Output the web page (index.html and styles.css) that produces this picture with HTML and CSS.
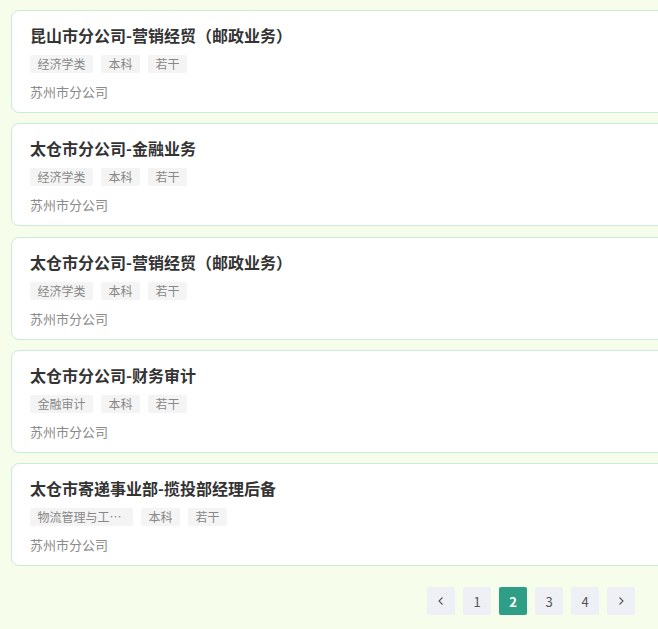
FILE: index.html
```html
<!DOCTYPE html>
<html lang="zh-CN">

<head>
    <meta charset="UTF-8" />
    <meta name="viewport" content="width=device-width, initial-scale=1.0" />
    <title>岗位列表</title>
    <link rel="stylesheet" href="styles.css">
</head>

<body>
    <ul class="job-list">
        <li class="job">
            <h3 class="job-title">昆山市分公司-营销经贸（邮政业务）</h3>
            <div class="tags">
                <span class="tag">经济学类</span>
                <span class="tag">本科</span>
                <span class="tag">若干</span>
            </div>
            <p class="job-place">苏州市分公司</p>
        </li>
        <li class="job">
            <h3 class="job-title">太仓市分公司-金融业务</h3>
            <div class="tags">
                <span class="tag">经济学类</span>
                <span class="tag">本科</span>
                <span class="tag">若干</span>
            </div>
            <p class="job-place">苏州市分公司</p>
        </li>
        <li class="job">
            <h3 class="job-title">太仓市分公司-营销经贸（邮政业务）</h3>
            <div class="tags">
                <span class="tag">经济学类</span>
                <span class="tag">本科</span>
                <span class="tag">若干</span>
            </div>
            <p class="job-place">苏州市分公司</p>
        </li>
        <li class="job">
            <h3 class="job-title">太仓市分公司-财务审计</h3>
            <div class="tags">
                <span class="tag">金融审计</span>
                <span class="tag">本科</span>
                <span class="tag">若干</span>
            </div>
            <p class="job-place">苏州市分公司</p>
        </li>
        <li class="job">
            <h3 class="job-title">太仓市寄递事业部-揽投部经理后备</h3>
            <div class="tags">
                <span class="tag tag-long">物流管理与工程类</span>
                <span class="tag">本科</span>
                <span class="tag">若干</span>
            </div>
            <p class="job-place">苏州市分公司</p>
        </li>
    </ul>

    <!-- 分页 -->
    <div class="pager">
        <a class="page" href="javascript:;">
            <svg width="10" height="10" viewBox="0 0 10 10"><path d="M6.5 1.5 3 5l3.5 3.5" fill="none" stroke="#555" stroke-width="1.1"/></svg>
        </a>
        <a class="page" href="javascript:;">1</a>
        <a class="page active" href="javascript:;">2</a>
        <a class="page" href="javascript:;">3</a>
        <a class="page" href="javascript:;">4</a>
        <a class="page" href="javascript:;">
            <svg width="10" height="10" viewBox="0 0 10 10"><path d="M3.5 1.5 7 5 3.5 8.5" fill="none" stroke="#555" stroke-width="1.1"/></svg>
        </a>
    </div>
</body>

</html>
```

FILE: styles.css
```css
* {
    margin: 0;
    padding: 0;
    box-sizing: border-box;
}

html {
    overflow-x: hidden;
}

body {
    background: #f6fdea;
    font-family: "Noto Sans CJK SC", "Noto Sans", sans-serif;
    color: #333;
}

ul {
    list-style: none;
}

.job-list {
    padding: 10px 0 0 11px;
    margin-right: -20px;
    display: flex;
    flex-direction: column;
    gap: 10.25px;
}

.job {
    background: #fff;
    border: 1px solid #c9ebd8;
    border-radius: 8px;
    padding: 12px 18px 10px;
}

.job-title {
    font-size: 16px;
    line-height: 24px;
    font-weight: bold;
    color: #333;
}

.tags {
    display: flex;
    gap: 8px;
    margin-top: 8px;
}

.tag {
    font-size: 12px;
    line-height: 18px;
    height: 18px;
    padding: 0 7.5px;
    background: #f4f4f4;
    color: #888;
    border-radius: 2px;
    white-space: nowrap;
}

.tag-long {
    max-width: 103px;
    overflow: hidden;
    text-overflow: ellipsis;
}

.job-place {
    margin-top: 9px;
    font-size: 13px;
    line-height: 20px;
    color: #8a8a8a;
}

/* 分页 */
.pager {
    display: flex;
    justify-content: flex-end;
    gap: 8px;
    margin: 21px 23px 0 0;
}

.page {
    width: 28px;
    height: 28px;
    display: flex;
    align-items: center;
    justify-content: center;
    background: #eef0f5;
    border-radius: 2px;
    font-size: 13px;
    color: #555;
    text-decoration: none;
}

.page.active {
    background: #2f9e86;
    color: #fff;
    font-weight: bold;
}
```
